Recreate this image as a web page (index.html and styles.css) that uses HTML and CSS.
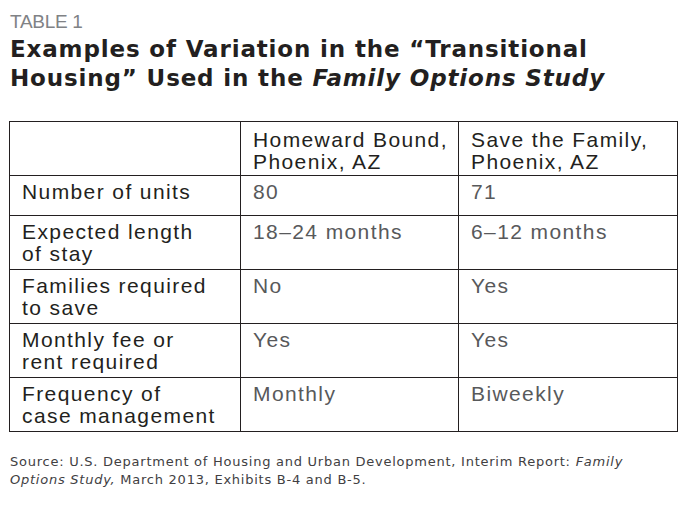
FILE: index.html
```html
<!DOCTYPE html>
<html>
<head>
<meta charset="utf-8">
<link rel="stylesheet" href="styles.css">
</head>
<body>
<div class="page">
  <div class="label">TABLE 1</div>
  <h1 class="title">Examples of Variation in the “Transitional<br>Housing” Used in the <em>Family Options Study</em></h1>
  <table class="grid">
    <colgroup><col class="c1"><col class="c2"><col class="c3"></colgroup>
    <tr class="r-head"><td></td><td class="hd">Homeward Bound,<br>Phoenix, AZ</td><td class="hd">Save the Family,<br>Phoenix, AZ</td></tr>
    <tr class="r-one"><td class="lab">Number of units</td><td class="val">80</td><td class="val">71</td></tr>
    <tr class="r-two"><td class="lab">Expected length<br>of stay</td><td class="val">18–24 months</td><td class="val">6–12 months</td></tr>
    <tr class="r-two"><td class="lab">Families required<br>to save</td><td class="val">No</td><td class="val">Yes</td></tr>
    <tr class="r-two"><td class="lab">Monthly fee or<br>rent required</td><td class="val">Yes</td><td class="val">Yes</td></tr>
    <tr class="r-two"><td class="lab">Frequency of<br>case management</td><td class="val">Monthly</td><td class="val">Biweekly</td></tr>
  </table>
  <p class="source">Source: U.S. Department of Housing and Urban Development, Interim Report: <em>Family</em><br><em>Options Study,</em> March 2013, Exhibits B‑4 and B‑5.</p>
</div>
</body>
</html>
```
FILE: styles.css
```css
html, body { margin: 0; padding: 0; background: #fff; }
.page { padding: 12px 0 0 10px; width: 676px; }
.label {
  font-family: "Liberation Sans", sans-serif;
  font-size: 19px; line-height: 20px; color: #808285;
  letter-spacing: -0.3px;
}
.title {
  margin: 3px 0 0 0;
  font-family: "DejaVu Sans", sans-serif;
  font-weight: bold; font-size: 23px; line-height: 29px;
  color: #231f20; letter-spacing: 0.85px;
  white-space: nowrap;
}
.title em { font-style: italic; }
.grid {
  margin-top: 28px;
  margin-left: -1px;
  border-collapse: collapse;
  width: 668px;
  table-layout: fixed;
  font-family: "Liberation Sans", sans-serif;
  font-size: 21px; line-height: 22px;
  letter-spacing: 1.4px;
}
.c1 { width: 231px; }
.c2 { width: 218px; }
.c3 { width: 219px; }
.grid td {
  border: 1.5px solid #231f20;
  vertical-align: top;
  padding: 5px 6px 0 12px;
  color: #231f20;
  white-space: nowrap;
}
.grid td.hd { padding-top: 7px; }
.grid td.val { color: #58595b; }
.r-head { height: 54px; }
.r-one { height: 40px; }
.r-two { height: 54px; }
.source {
  margin: 21px 0 0 0;
  font-family: "DejaVu Sans", sans-serif;
  font-size: 13px; line-height: 18px; color: #414042;
  letter-spacing: 0.75px;
  white-space: nowrap;
}
```
